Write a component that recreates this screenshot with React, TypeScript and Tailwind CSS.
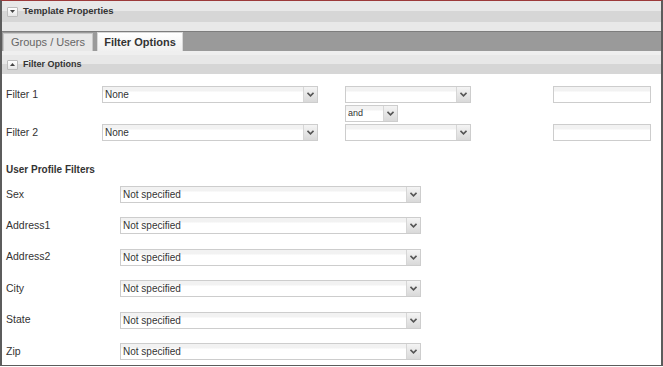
import React from 'react';

const font = { fontFamily: '"Liberation Sans", Arial, sans-serif' };

function Chevron() {
    return (
        <svg width="7" height="5" viewBox="0 0 7 5" className="block">
            <path d="M0.5 0.8 L3.5 3.8 L6.5 0.8" fill="none" stroke="#555" strokeWidth="1.6" />
        </svg>
    );
}

function Select({ value, className, textClass = 'text-[10px]' }: { value?: string; className: string; textClass?: string }) {
    return (
        <div
            className={`flex h-[17px] border border-[#cdcdcd] bg-[linear-gradient(to_bottom,#f2f2f2_0px,#f2f2f2_4px,#ffffff_5px)] ${className}`}
        >
            <div className={`flex flex-1 items-center overflow-hidden pl-[2px] text-[#333] ${textClass}`}>{value}</div>
            <div className="flex w-[14px] items-center justify-center border-l border-[#d6d6d6] bg-[linear-gradient(to_bottom,#f4f4f4,#d9d9d9)]">
                <Chevron />
            </div>
        </div>
    );
}

function TextBox({ className }: { className: string }) {
    return (
        <div
            className={`h-[17px] border border-[#cdcdcd] bg-[linear-gradient(to_bottom,#f2f2f2_0px,#f2f2f2_4px,#ffffff_5px)] ${className}`}
        />
    );
}

function SectionIcon({ up }: { up?: boolean }) {
    return (
        <div className="flex h-[10px] w-[11px] items-center justify-center rounded-[1px] border border-[#bcbcbc] bg-[linear-gradient(to_bottom,#ffffff,#e6e6e6)]">
            <svg width="5" height="3" viewBox="0 0 5 3" className="block">
                {up ? <path d="M0 3 L2.5 0 L5 3 Z" fill="#444" /> : <path d="M0 0 L5 0 L2.5 3 Z" fill="#444" />}
            </svg>
        </div>
    );
}

const profileFields = ['Sex', 'Address1', 'Address2', 'City', 'State', 'Zip'];

export default function App() {
    return (
        <div style={font} className="h-[367px] w-[663px] bg-white">
            <div className="flex h-[366px] flex-col border-x-2 border-b border-t border-x-[#5c5c5c] border-b-[#5c5c5c] border-t-[#9c3a3a]">
                {/* Template Properties header */}
                <div className="flex h-[21px] items-center gap-[5px] bg-[linear-gradient(to_bottom,#e8e8e8_50%,#d6d6d6_50%)] pl-[5px]">
                    <SectionIcon />
                    <span className="text-[9.5px] font-bold text-[#333]">Template Properties</span>
                </div>
                <div className="h-[9px] bg-[#e8e8e8]" />

                {/* Tabs */}
                <div className="flex h-[20px] items-end gap-[4px] border-t border-[#7d7d7d] bg-[#9a9a9a] pl-[1px]">
                    <div className="flex h-[18px] w-[90px] items-center justify-center border border-b-0 border-[#c8c8c8] bg-[#e8e8e8] text-[11px] text-[#666]">
                        Groups / Users
                    </div>
                    <div className="flex h-[19px] w-[86px] items-center justify-center border border-b-0 border-[#d8d8d8] bg-[linear-gradient(to_bottom,#ffffff,#f0f0f0)] text-[11px] font-bold text-[#333]">
                        Filter Options
                    </div>
                </div>

                {/* Filter Options header */}
                <div className="h-[4px] bg-[#efefef]" />
                <div className="flex h-[19px] items-center gap-[5px] bg-[linear-gradient(to_bottom,#e8e8e8_50%,#d6d6d6_50%)] pl-[5px]">
                    <SectionIcon up />
                    <span className="text-[9px] font-bold text-[#333]">Filter Options</span>
                </div>

                {/* Content */}
                <div className="flex flex-col pl-[4px] pt-[12px] text-[#333]">
                    <div className="flex flex-col gap-[2px]">
                        <div className="flex items-center">
                            <div className="w-[96px] text-[10.5px]">Filter 1</div>
                            <Select value="None" className="w-[216px]" />
                            <Select className="ml-[27px] w-[126px]" />
                            <TextBox className="ml-[82px] w-[98px]" />
                        </div>
                        <div className="flex items-center">
                            <Select value="and" className="ml-[339px] w-[53px]" textClass="text-[9px]" />
                        </div>
                        <div className="flex items-center">
                            <div className="w-[96px] text-[10.5px]">Filter 2</div>
                            <Select value="None" className="w-[216px]" />
                            <Select className="ml-[27px] w-[126px]" />
                            <TextBox className="ml-[82px] w-[98px]" />
                        </div>
                    </div>

                    <div className="mt-[23px] text-[10px] font-bold leading-[12px]">User Profile Filters</div>

                    <div className="mt-[10px] flex flex-col gap-[14.4px]">
                        {profileFields.map((field) => (
                            <div key={field} className="flex items-center">
                                <div className="w-[114px] text-[10.5px]">{field}</div>
                                <Select value="Not specified" className="w-[301px]" />
                            </div>
                        ))}
                    </div>
                </div>
            </div>
        </div>
    );
}
